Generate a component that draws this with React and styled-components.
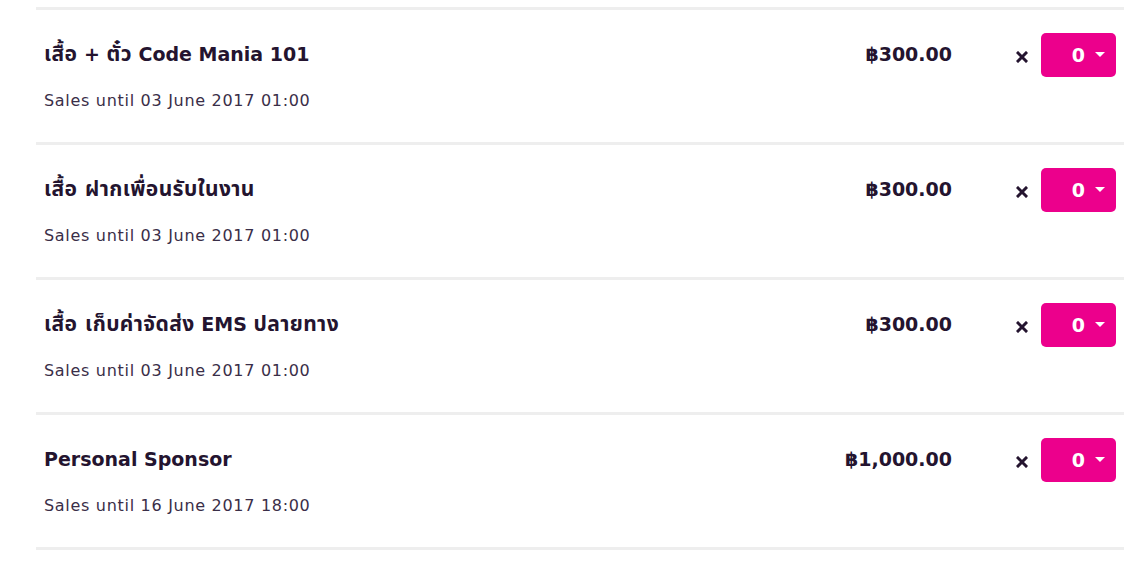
import React from "react";
import styled, { createGlobalStyle } from "styled-components";

const Global = createGlobalStyle`
  html, body { margin: 0; padding: 0; background: #fff; }
  body { font-family: "DejaVu Sans", "Noto Sans Thai", "Noto Sans", sans-serif; color: #24142f; }
`;

const List = styled.div`
  margin-left: 36px;
  width: 1088px;
  padding-top: 7px;
`;

const Row = styled.div`
  display: grid;
  grid-template-columns: 1fr auto 89px 75px;
  align-items: start;
  border-top: 3px solid #eeeeee;
  padding: 23px 8px 29px 8px;
  &:last-child { border-bottom: 3px solid #eeeeee; }
`;

const Info = styled.div`
  display: flex;
  flex-direction: column;
  gap: 21px;
  padding-top: 7px;
`;

const Title = styled.div`
  font-size: 19px;
  font-weight: 700;
  line-height: 28px;
  height: 28px;
  white-space: nowrap;
  color: #24142f;
`;

const Thai = styled.span`
  font-size: 21px;
  letter-spacing: 0.4px;
  line-height: 28px;
`;

const Sub = styled.div`
  font-size: 16px;
  letter-spacing: 0.7px;
  line-height: 24px;
  color: #3a2e48;
`;

const Price = styled.div`
  font-size: 19px;
  font-weight: 700;
  line-height: 28px;
  padding-top: 7px;
  color: #24142f;
`;

const Times = styled.div`
  display: flex;
  justify-content: flex-end;
  padding-right: 13px;
  padding-top: 18px;
`;

const QtyButton = styled.button`
  width: 75px;
  height: 44px;
  border: none;
  border-radius: 5px;
  background: #ec008c;
  color: #fff;
  font-family: inherit;
  font-size: 19px;
  font-weight: 700;
  display: flex;
  align-items: center;
  justify-content: flex-end;
  gap: 10px;
  padding: 0 11px 0 0;
  cursor: pointer;
`;

const Caret = styled.span`
  width: 0;
  height: 0;
  border-left: 5px solid transparent;
  border-right: 5px solid transparent;
  border-top: 5px solid #fff;
  margin-top: -2px;
`;

const items = [
  { title: [["th", "เสื้อ"], ["en", " + "], ["th", "ตั๋ว"], ["en", " Code Mania 101"]], date: "03 June 2017 01:00", price: "฿300.00" },
  { title: [["th", "เสื้อ ฝากเพื่อนรับในงาน"]], date: "03 June 2017 01:00", price: "฿300.00" },
  { title: [["th", "เสื้อ เก็บค่าจัดส่ง"], ["en", " EMS "], ["th", "ปลายทาง"]], date: "03 June 2017 01:00", price: "฿300.00" },
  { title: [["en", "Personal Sponsor"]], date: "16 June 2017 18:00", price: "฿1,000.00" },
];

export default function App() {
  return (
    <>
      <Global />
      <List>
        {items.map((it, i) => (
          <Row key={i}>
            <Info>
              <Title>
                {it.title.map(([lang, text], j) =>
                  lang === "th" ? <Thai key={j}>{text}</Thai> : <span key={j}>{text}</span>
                )}
              </Title>
              <Sub>Sales until {it.date}</Sub>
            </Info>
            <Price>{it.price}</Price>
            <Times>
              <svg width="12" height="12" viewBox="0 0 12 12">
                <path d="M2 2 L10 10 M10 2 L2 10" stroke="#24142f" strokeWidth="3" strokeLinecap="square" />
              </svg>
            </Times>
            <QtyButton>
              <span>0</span>
              <Caret />
            </QtyButton>
          </Row>
        ))}
      </List>
    </>
  );
}
